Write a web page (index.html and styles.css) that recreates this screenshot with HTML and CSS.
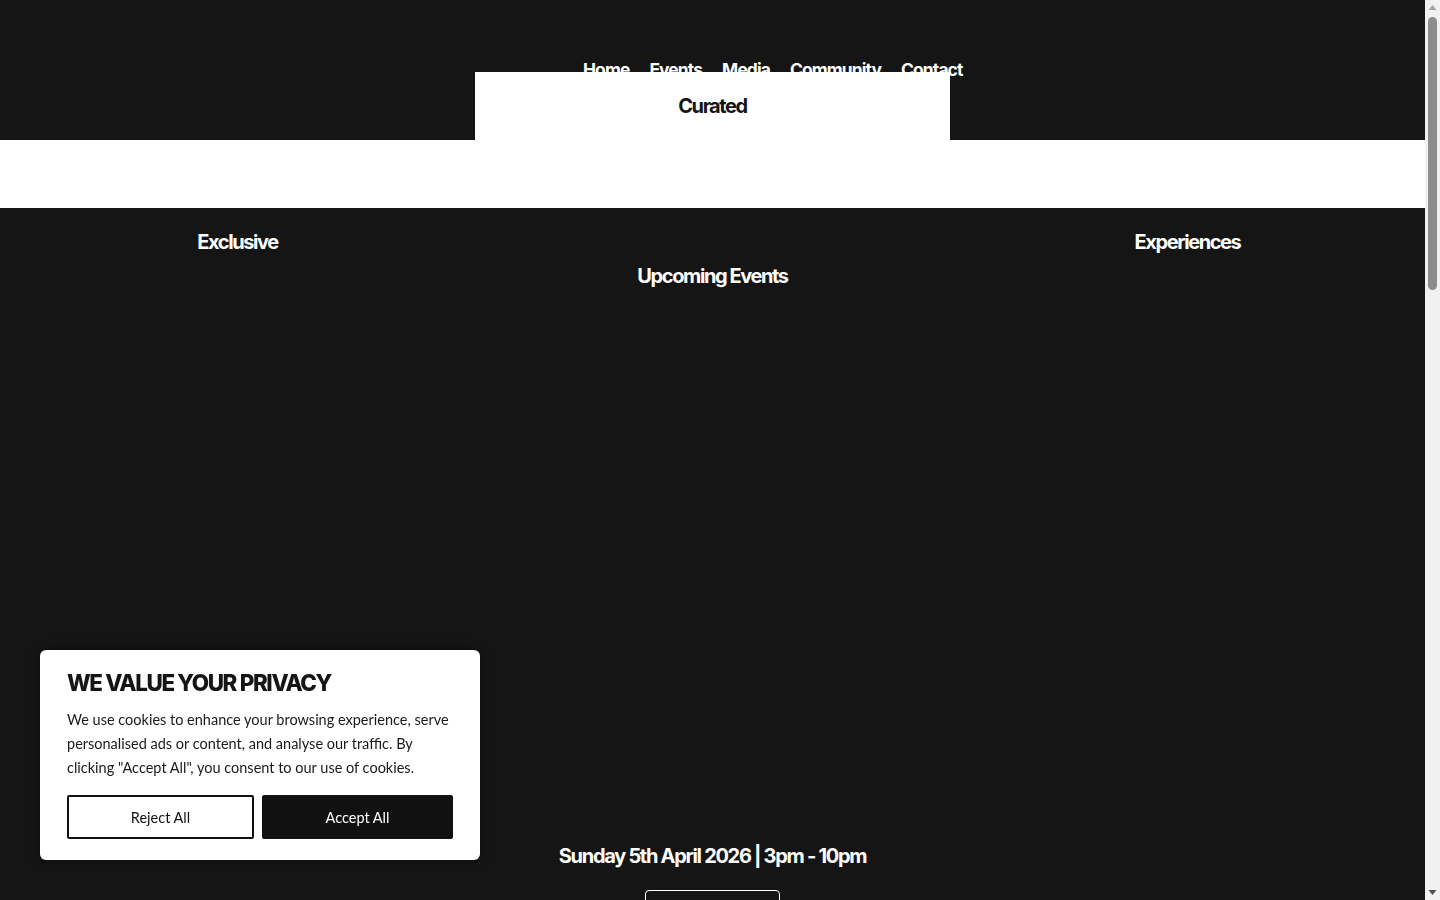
FILE: index.html
```html
<!DOCTYPE html>
<html lang="en">
<head>
<meta charset="utf-8">
<title>Curated Exclusive Experiences</title>
<link rel="stylesheet" href="styles.css">
</head>
<body>
<div class="page">
<header class="site-header">
  <nav class="main-nav">
    <a href="#">Home</a>
    <a href="#">Events</a>
    <a href="#">Media</a>
    <a href="#">Community</a>
    <a href="#">Contact</a>
  </nav>
  <div class="header-grid">
    <div class="cell"></div>
    <div class="cell curated"><h2>Curated</h2></div>
    <div class="cell"></div>
  </div>
</header>
<div class="white-band"></div>
<section class="hero-words">
  <h2 class="word">Exclusive</h2>
  <div></div>
  <h2 class="word">Experiences</h2>
</section>
<section class="events">
  <h2 class="events-title">Upcoming Events</h2>
  <div class="event-media"></div>
  <h3 class="event-date">Sunday 5th April 2026 | 3pm - 10pm</h3>
  <a class="event-btn" href="#">Get Tickets</a>
</section>
<section class="filler"></section>
</div>

<div class="scrollbar" aria-hidden="true">
  <svg class="sb-arrow" width="15" height="15" viewBox="0 0 15 15"><polygon points="3.5,10 7.5,5 11.5,10" fill="#a3a3a3"/></svg>
  <div class="sb-track"><div class="sb-thumb"></div></div>
  <svg class="sb-arrow" width="15" height="15" viewBox="0 0 15 15"><polygon points="3.5,5 11.5,5 7.5,10" fill="#505050"/></svg>
</div>

<div class="cookie">
  <h3 class="cookie-title">WE VALUE YOUR PRIVACY</h3>
  <p class="cookie-text">We use cookies to enhance your browsing experience, serve personalised ads or content, and analyse our traffic. By clicking "Accept All", you consent to our use of cookies.</p>
  <div class="cookie-actions">
    <button class="btn btn-reject">Reject All</button>
    <button class="btn btn-accept">Accept All</button>
  </div>
</div>
</body>
</html>
```
FILE: styles.css
```css
html, body {
  margin: 0;
  padding: 0;
}
body {
  background: #151515;
  color: #fff;
  font-family: Inter, "Liberation Sans", sans-serif;
}
.page {
  margin-right: 15px;
}
h2, h3, p { margin: 0; }

/* scrollbar strip */
.scrollbar {
  position: fixed;
  top: 0;
  right: 0;
  width: 15px;
  height: 100vh;
  background: #f1f1f1;
  display: flex;
  flex-direction: column;
}
.sb-arrow {
  display: block;
  flex: none;
}
.sb-track {
  flex: 1;
  padding: 2px 3px 0 3px;
}
.sb-thumb {
  height: 273px;
  background: #8c8c8c;
  border-radius: 5px;
}

.site-header {
  position: relative;
  height: 140px;
  background: #151515;
}
.main-nav {
  position: absolute;
  top: 59px;
  left: 583px;
  display: flex;
  gap: 20px;
  z-index: 0;
}
.main-nav a {
  color: #fff;
  text-decoration: none;
  font-weight: 700;
  font-size: 17.4px;
  letter-spacing: -0.05em;
  line-height: 22px;
}
.header-grid {
  display: grid;
  grid-template-columns: 1fr 1fr 1fr;
  height: 140px;
}
.curated {
  position: relative;
  z-index: 1;
  margin-top: 72px;
  background: #fff;
  color: #151515;
  display: flex;
  justify-content: center;
}
.curated h2, .word, .events-title, .event-date {
  font-weight: 700;
  font-size: 20px;
  letter-spacing: -0.07em;
  line-height: 24px;
}
.event-date {
  letter-spacing: -0.065em;
}
.curated h2 { padding-top: 22px; }

.white-band {
  height: 68px;
  background: #fff;
}

.hero-words {
  display: grid;
  grid-template-columns: 1fr 1fr 1fr;
  padding-top: 22px;
  text-align: center;
}
.events {
  display: flex;
  flex-direction: column;
  align-items: center;
  padding-top: 10px;
}
.event-media {
  height: 556px;
}
.event-date {
  margin-bottom: 22px;
}
.event-btn {
  display: block;
  width: 133px;
  height: 56px;
  border: 1px solid #fff;
  border-radius: 4px;
  color: #fff;
  text-decoration: none;
  font-size: 14px;
  text-align: center;
  line-height: 56px;
}
.filler {
  height: 1900px;
}

.cookie {
  position: fixed;
  left: 40px;
  top: 650px;
  width: 440px;
  height: 210px;
  box-sizing: border-box;
  padding: 21px 27px 0;
  background: #fff;
  color: #151515;
  border-radius: 6px;
  box-shadow: 0 0 12px rgba(0,0,0,0.4);
}
.cookie-title {
  font-weight: 800;
  font-size: 22.4px;
  letter-spacing: -0.06em;
  line-height: 24px;
}
.cookie-text {
  margin-top: 13px;
  font-family: Lato, "Open Sans", sans-serif;
  font-size: 14.5px;
  line-height: 24px;
  color: #1a1a1a;
}
.cookie-actions {
  display: flex;
  gap: 8px;
  margin-top: 15px;
}
.btn {
  height: 44px;
  font-family: Lato, "Open Sans", sans-serif;
  font-size: 14.5px;
  border-radius: 2px;
  cursor: pointer;
}
.btn-reject {
  width: 187px;
  background: #fff;
  border: 2px solid #111;
  color: #111;
}
.btn-accept {
  width: 191px;
  background: #111;
  border: 1px solid #111;
  color: #fff;
}
```
